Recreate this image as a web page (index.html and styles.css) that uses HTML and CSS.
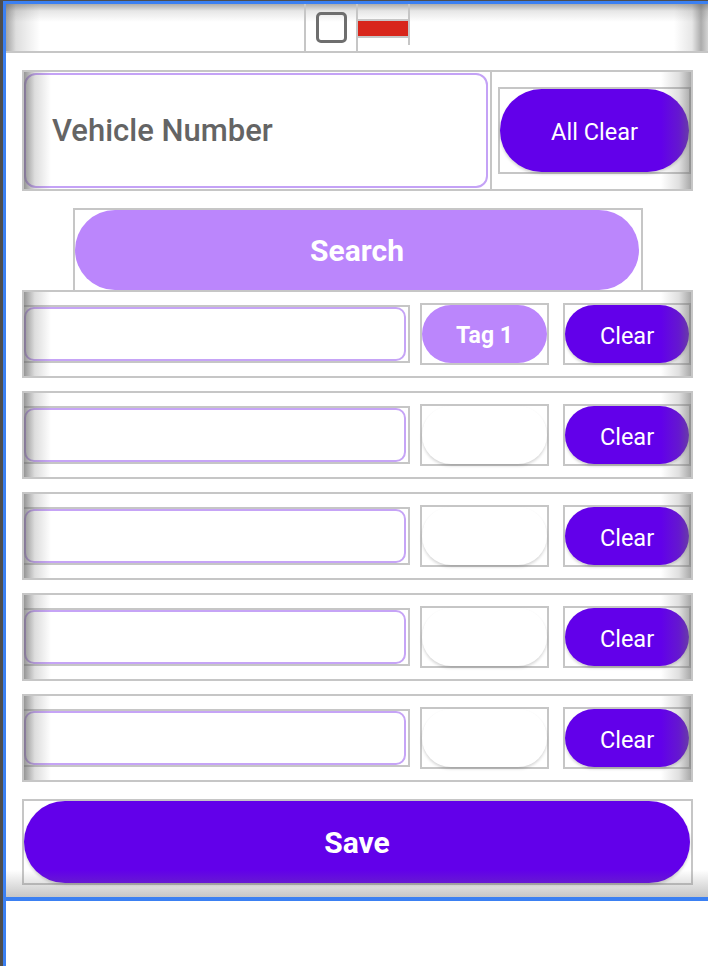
FILE: index.html
```html
<!DOCTYPE html>
<html lang="en">
<head>
<meta charset="utf-8">
<title>Vehicle Tags</title>
<link rel="stylesheet" href="styles.css">
</head>
<body>
<div class="outer">
  <div class="rail">
    <div class="panel">
      <header class="toolbar">
        <div class="tool tool-check"><span class="checkbox"></span></div>
        <div class="tool tool-flag"><span class="flag"></span></div>
      </header>
      <main class="form">
        <div class="top-row fade">
          <div class="vn">Vehicle Number</div>
          <div class="allclear-col">
            <div class="allclear-box"><button type="button" class="btn btn-dark btn-all">All Clear</button></div>
          </div>
        </div>
        <div class="search-box"><button type="button" class="btn btn-light btn-search">Search</button></div>
        <div class="rows">
          <div class="row fade">
            <div class="field-box"><div class="field"></div></div>
            <div class="tag-box"><button type="button" class="btn btn-light tag">Tag 1</button></div>
            <div class="clear-box"><button type="button" class="btn btn-dark clear">Clear</button></div>
          </div>
          <div class="row fade">
            <div class="field-box"><div class="field"></div></div>
            <div class="tag-box"><button type="button" class="btn tag-empty"></button></div>
            <div class="clear-box"><button type="button" class="btn btn-dark clear">Clear</button></div>
          </div>
          <div class="row fade">
            <div class="field-box"><div class="field"></div></div>
            <div class="tag-box"><button type="button" class="btn tag-empty"></button></div>
            <div class="clear-box"><button type="button" class="btn btn-dark clear">Clear</button></div>
          </div>
          <div class="row fade">
            <div class="field-box"><div class="field"></div></div>
            <div class="tag-box"><button type="button" class="btn tag-empty"></button></div>
            <div class="clear-box"><button type="button" class="btn btn-dark clear">Clear</button></div>
          </div>
          <div class="row fade">
            <div class="field-box"><div class="field"></div></div>
            <div class="tag-box"><button type="button" class="btn tag-empty"></button></div>
            <div class="clear-box"><button type="button" class="btn btn-dark clear">Clear</button></div>
          </div>
        </div>
        <div class="save-box"><button type="button" class="btn btn-dark btn-save">Save</button></div>
      </main>
    </div>
  </div>
</div>
</body>
</html>
```
FILE: styles.css
```css
* { box-sizing: border-box; }
html, body { margin: 0; padding: 0; background: #fff; }
body { font-family: Roboto, "Liberation Sans", sans-serif; overflow: hidden; }

.outer {
  height: 966px;
  border-left: 3px solid #4e4e4e;
  border-top: 1px solid #4e4e4e;
}
.rail {
  height: 100%;
  border-left: 3px solid #3b80f2;
}
.panel {
  position: relative;
  height: 900px;
  border-top: 3px solid #3b80f2;
  border-bottom: 4px solid #3b80f2;
  display: flex;
  flex-direction: column;
}
.panel::after {
  content: "";
  position: absolute;
  left: 0; right: 0; bottom: 0;
  height: 27px;
  background: linear-gradient(to bottom, rgba(120,120,120,0), rgba(120,120,120,0.42));
  pointer-events: none;
}

/* toolbar */
.toolbar {
  flex: 0 0 49px;
  height: 49px;
  border-bottom: 2px solid #c6c6c6;
  display: flex;
  justify-content: center;
  align-items: flex-start;
  background:
    linear-gradient(to bottom, rgba(90,90,90,0.5), rgba(90,90,90,0.15) 7px, rgba(90,90,90,0) 18px),
    linear-gradient(to right, rgba(90,90,90,0.55), rgba(90,90,90,0.2) 10px, rgba(90,90,90,0) 34px),
    linear-gradient(to left, rgba(170,170,170,0.5) 0, rgba(90,90,90,0.5) 7px, rgba(90,90,90,0.15) 16px, rgba(90,90,90,0) 34px),
    #fff;
}
.tool-check {
  width: 54px;
  height: 47px;
  border-left: 2px solid #c6c6c6;
  border-right: 2px solid #c6c6c6;
  display: flex;
  align-items: center;
  justify-content: center;
}
.checkbox {
  display: block;
  width: 31px;
  height: 31px;
  border: 3px solid #6e6e6e;
  border-radius: 5px;
}
.tool-flag {
  width: 52px;
  height: 41px;
  border-right: 2px solid #c6c6c6;
  padding-top: 15px;
}
.flag {
  display: block;
  width: 50px;
  height: 19px;
  border-top: 2px solid #c6c6c6;
  border-bottom: 2px solid #c6c6c6;
  background: #d8261b;
}

/* form */
.form {
  padding: 17px 15px 0 16px;
}
.fade { position: relative; }
.fade::before,
.fade::after {
  content: "";
  position: absolute;
  top: 0; bottom: 0;
  pointer-events: none;
}
.fade::before {
  left: 0;
  width: 27px;
  background: linear-gradient(to right, rgba(100,100,100,0.68), rgba(100,100,100,0.22) 40%, rgba(100,100,100,0));
}
.fade::after {
  right: 0;
  width: 30px;
  background: linear-gradient(to left, rgba(110,110,110,0.6), rgba(110,110,110,0.22) 40%, rgba(110,110,110,0));
}

.top-row {
  display: flex;
  height: 121px;
  border: 2px solid #c6c6c6;
}
.vn {
  width: 464px;
  margin: 1px 0;
  border: 2px solid #c4a2f6;
  border-radius: 12px;
  display: flex;
  align-items: center;
  padding-left: 26px;
  font-size: 31px;
  font-weight: 500;
  color: #646464;
}
.allclear-col {
  flex: 1;
  margin-left: 2px;
  border-left: 2px solid #c6c6c6;
  padding-left: 6px;
  display: flex;
  align-items: center;
}
.allclear-box {
  width: 193px;
  height: 87px;
  border: 2px solid #c6c6c6;
}

.search-box {
  margin: 17px 0 0 51px;
  width: 570px;
  height: 84px;
  border: 2px solid #c6c6c6;
  padding-right: 2px;
}

.rows {
  margin-top: -2px;
  display: flex;
  flex-direction: column;
  gap: 13px;
}
.row {
  height: 88px;
  border: 2px solid #c6c6c6;
  display: flex;
  align-items: center;
}
.field-box {
  width: 386px;
  height: 58px;
  border: 2px solid #c6c6c6;
  border-left: 0;
  padding: 0 2px 0 0;
}
.field {
  height: 100%;
  border: 2px solid #c6a4f6;
  border-radius: 10px;
  background: transparent;
}
.tag-box {
  margin-left: 10px;
  width: 129px;
  height: 62px;
  border: 2px solid #c6c6c6;
}
.clear-box {
  margin-left: 14px;
  width: 128px;
  height: 62px;
  border: 2px solid #c6c6c6;
}

.save-box {
  margin-top: 17px;
  height: 86px;
  border: 2px solid #c6c6c6;
  padding-right: 1px;
}

/* buttons */
.btn {
  display: flex;
  align-items: center;
  justify-content: center;
  width: 100%;
  height: 100%;
  margin: 0;
  padding: 0;
  border: 0;
  border-radius: 999px;
  font-family: Roboto, "Liberation Sans", sans-serif;
  color: #fff;
  cursor: pointer;
}
.btn-dark {
  background: #6200ea;
  box-shadow: 0 2px 3px rgba(0,0,0,0.18);
}
.btn-light {
  background: #bb86fc;
}
.btn-all { font-size: 23.5px; font-weight: 400; padding-top: 2px; }
.btn-search { font-size: 30px; font-weight: 700; }
.tag { font-size: 23px; font-weight: 700; padding-top: 2px; }
.tag-empty {
  background: #fff;
  box-shadow: 0 2px 3px rgba(0,0,0,0.16);
}
.clear { font-size: 23.5px; font-weight: 400; padding-top: 3px; }
.btn-save { font-size: 30px; font-weight: 700; }
```
